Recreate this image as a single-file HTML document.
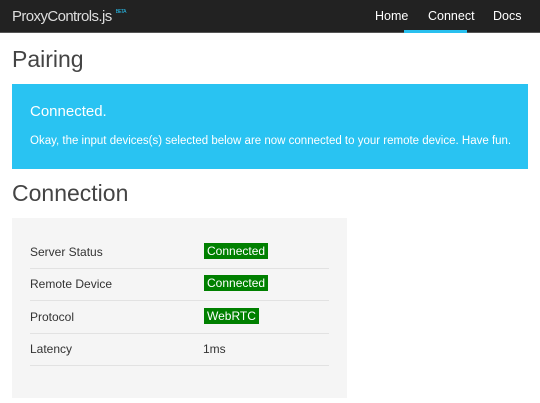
<!DOCTYPE html>
<html><head><style>
body{margin:0;width:540px;height:403px;overflow:hidden;background:#fff;font-family:"Liberation Sans",sans-serif;color:#333;position:relative}
.nav{position:absolute;left:0;top:0;width:540px;height:32px;background:#222;border-bottom:1px solid #555}
.brand{position:absolute;left:12px;top:8px;font-size:15px;color:#ddd;letter-spacing:-0.6px}
.brand sup{font-size:5px;color:#29c0ef;vertical-align:top;position:relative;top:1px;margin-left:4px}
.nl{position:absolute;top:9px;font-size:12.5px;color:#fff}
.ul{position:absolute;left:404px;top:30px;width:63px;height:3px;background:#29c0ef}
h1{position:absolute;margin:0;font-weight:300;font-size:23px;color:#444}
.alert{position:absolute;left:12px;top:84px;width:516px;height:85px;background:#29c3f2;color:#fff}
.well{position:absolute;left:12px;top:218px;width:335px;height:180px;background:#f5f5f5}
.row{position:absolute;left:18px;width:299px;height:32px;border-bottom:1px solid #e2e2e2;font-size:12px}
.row span{position:absolute;top:9px}
.lbl{position:absolute;left:174px;top:7px;background:#008000;color:#fff;padding:1px 3px;font-size:12px}
</style></head><body>
<div class="nav">
<div class="brand">ProxyControls.js<sup>BETA</sup></div>
<div class="nl" style="left:375px">Home</div>
<div class="nl" style="left:428px">Connect</div>
<div class="nl" style="left:493px">Docs</div>
<div class="ul"></div>
</div>
<h1 style="left:12px;top:46px">Pairing</h1>
<div class="alert">
<div style="position:absolute;left:18px;top:19px;font-size:15px">Connected.</div>
<div style="position:absolute;left:18px;top:51px;font-size:11.5px">Okay, the input devices(s) selected below are now connected to your remote device. Have fun.</div>
</div>
<h1 style="left:12px;top:180px">Connection</h1>
<div class="well">
<div class="row" style="top:18px"><span>Server Status</span><div class="lbl">Connected</div></div>
<div class="row" style="top:50px"><span>Remote Device</span><div class="lbl">Connected</div></div>
<div class="row" style="top:83px"><span>Protocol</span><div class="lbl">WebRTC</div></div>
<div class="row" style="top:115px"><span>Latency</span><span style="left:173px">1ms</span></div>
</div>
</body></html>
